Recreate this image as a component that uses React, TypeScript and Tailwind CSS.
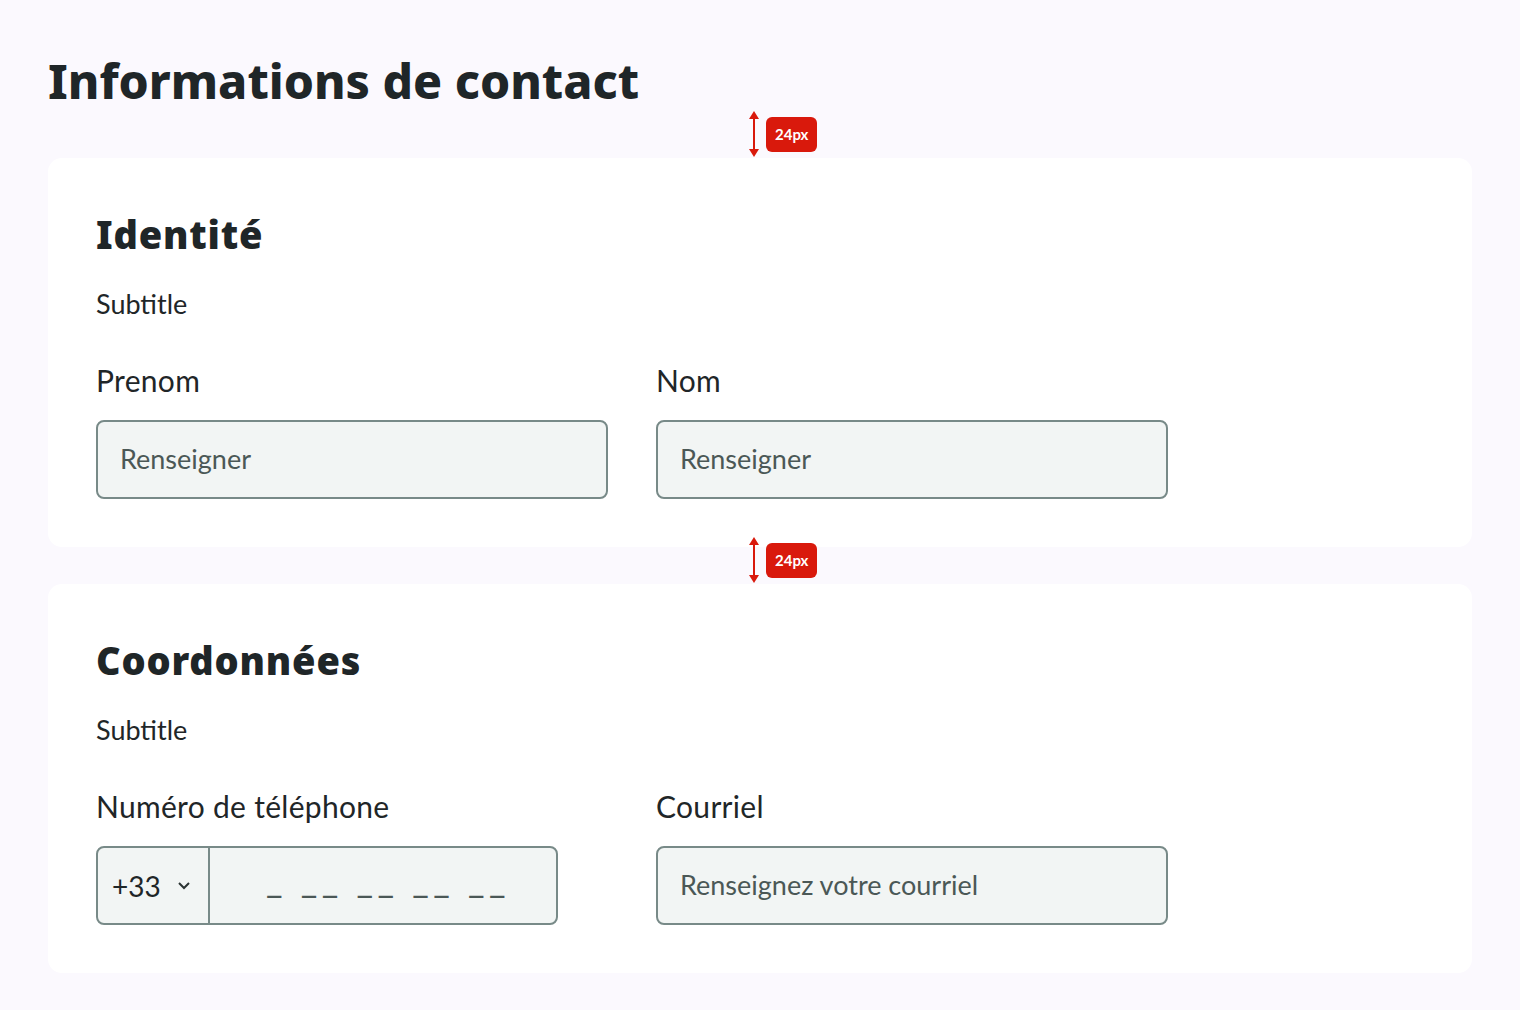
function Spacer({ top }: { top: string }) {
  return (
    <div className={`absolute left-[748px] ${top} flex items-center gap-[6px]`}>
      <svg width="12" height="48" viewBox="0 0 12 48" className="block">
        <path d="M6 3 V45" stroke="#d9190c" strokeWidth="2" />
        <path d="M1 9 L6 1 L11 9 Z" fill="#d9190c" />
        <path d="M1 39 L6 47 L11 39 Z" fill="#d9190c" />
      </svg>
      <span className="rounded-[6px] bg-[#d9190c] px-[9px] h-[35px] flex items-center text-[15px] font-bold text-white font-['Lato',sans-serif]">
        24px
      </span>
    </div>
  )
}

function Field({ label, placeholder }: { label: string; placeholder: string }) {
  return (
    <div className="flex flex-col gap-[22px] w-[512px]">
      <label className="text-[30px] leading-[36px] tracking-[0.3px] text-[#1f2628]">{label}</label>
      <div className="h-[79px] rounded-[8px] border-2 border-[#788a88] bg-[#f2f5f4] px-[22px] flex items-center">
        <span className="text-[27px] text-[#4b5856]">{placeholder}</span>
      </div>
    </div>
  )
}

function PhoneField() {
  return (
    <div className="flex flex-col gap-[22px] w-[512px]">
      <label className="text-[30px] leading-[36px] tracking-[0.3px] text-[#1f2628]">Numéro de téléphone</label>
      <div className="h-[79px] w-[462px] rounded-[8px] border-2 border-[#788a88] bg-[#f2f5f4] flex">
        <div className="w-[112px] border-r-2 border-[#788a88] flex items-center pl-[14px] gap-[14px]">
          <span className="text-[28px] text-[#1f2628]">+33</span>
          <svg width="18" height="12" viewBox="0 0 18 12">
            <path d="M4 3 L9 8 L14 3" stroke="#2b3433" strokeWidth="2" fill="none" />
          </svg>
        </div>
        <div className="flex-1 flex items-center pl-[56px] pb-[14px]">
          <span className="text-[36px] leading-[40px] text-[#4b5856] tracking-[4.5px]">_ __ __ __ __</span>
        </div>
      </div>
    </div>
  )
}

export default function App() {
  return (
    <main className="relative min-h-screen bg-[#fbf9fe] px-[48px] pt-[52px] pb-[40px] font-['Lato',sans-serif]">
      <h1 className="text-[48px] leading-[58px] font-extrabold text-[#1f2628] font-['Noto_Sans',sans-serif]">
        Informations de contact
      </h1>

      <Spacer top="top-[110px]" />
      <Spacer top="top-[536px]" />

      <section className="mt-[48px] bg-white rounded-[14px] p-[48px]">
        <h2 className="pt-[4px] text-[38px] leading-[48px] font-black tracking-[0.8px] text-[#1f2628] font-['Noto_Sans',sans-serif]">Identité</h2>
        <p className="mt-[30px] text-[27px] leading-[32px] text-[#1f2628]">Subtitle</p>
        <div className="mt-[42px] flex gap-[48px]">
          <Field label="Prenom" placeholder="Renseigner" />
          <Field label="Nom" placeholder="Renseigner" />
        </div>
      </section>

      <section className="mt-[37px] bg-white rounded-[14px] p-[48px]">
        <h2 className="pt-[4px] text-[38px] leading-[48px] font-black tracking-[0.8px] text-[#1f2628] font-['Noto_Sans',sans-serif]">Coordonnées</h2>
        <p className="mt-[30px] text-[27px] leading-[32px] text-[#1f2628]">Subtitle</p>
        <div className="mt-[42px] flex gap-[48px]">
          <PhoneField />
          <Field label="Courriel" placeholder="Renseignez votre courriel" />
        </div>
      </section>
    </main>
  )
}
